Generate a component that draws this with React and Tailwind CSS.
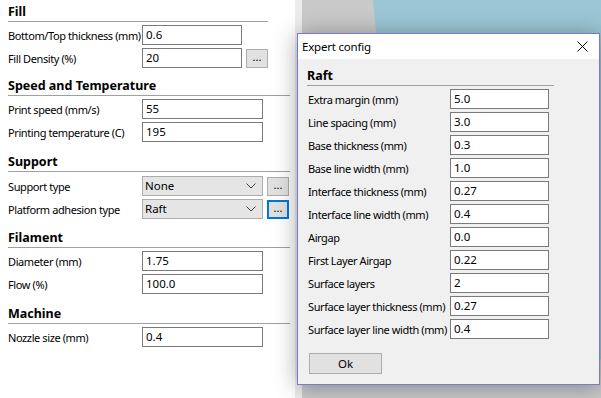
import React from 'react';

const font = { fontFamily: '"Noto Sans", "Segoe UI", sans-serif' };

const Chevron = () => (
  <svg width="10" height="6" viewBox="0 0 10 6" className="shrink-0">
    <polyline points="0.5,0.5 5,5 9.5,0.5" fill="none" stroke="#404040" strokeWidth="1" />
  </svg>
);

const Dots = ({ focused }) => (
  <div
    className={
      'ml-[4px] w-[22px] h-[19px] flex items-center justify-center bg-[#e1e1e1] text-[11px] leading-none pb-[3px] ' +
      (focused ? 'border-2 border-[#0078d7]' : 'border border-[#adadad]')
    }
  >
    ...
  </div>
);

const Field = ({ value, w = 'w-[121px]' }) => (
  <div className={`${w} h-[20px] border border-[#7a7a7a] bg-white pl-[3px] flex items-center text-[11.5px] leading-none`}>
    {value}
  </div>
);

const Combo = ({ value }) => (
  <div className="w-[121px] h-[20px] border border-[#adadad] bg-[#e5e5e5] pl-[2px] pr-[6px] flex items-center justify-between text-[11.5px] leading-none">
    <span>{value}</span>
    <Chevron />
  </div>
);

const Row = ({ label, children }) => (
  <div className="h-[20px] flex items-center">
    <span className="w-[134px] shrink-0 text-[11px] tracking-[-0.4px] leading-none whitespace-nowrap">{label}</span>
    {children}
  </div>
);

const Header = ({ title, line = 'w-[282px]' }) => (
  <div className={`${line} h-[22px] border-b border-[#a0a0a0] flex items-end pb-[3px]`}>
    <span className="text-[12.5px] font-bold leading-none">{title}</span>
  </div>
);

const DRow = ({ label, value }) => (
  <div className="h-[20px] flex items-center">
    <span className="w-[142px] shrink-0 text-[11px] tracking-[-0.4px] leading-none whitespace-nowrap">{label}</span>
    <div className="w-[99px] h-[20px] border border-[#7a7a7a] bg-white pl-[3px] flex items-center text-[11.5px] leading-none">
      {value}
    </div>
  </div>
);

const raft = [
  ['Extra margin (mm)', '5.0'],
  ['Line spacing (mm)', '3.0'],
  ['Base thickness (mm)', '0.3'],
  ['Base line width (mm)', '1.0'],
  ['Interface thickness (mm)', '0.27'],
  ['Interface line width (mm)', '0.4'],
  ['Airgap', '0.0'],
  ['First Layer Airgap', '0.22'],
  ['Surface layers', '2'],
  ['Surface layer thickness (mm)', '0.27'],
  ['Surface layer line width (mm)', '0.4'],
];

export default function App() {
  return (
    <div className="relative w-[601px] h-[398px] flex overflow-hidden text-black" style={font}>
      <div className="w-[295px] h-full bg-white pl-[8px] shrink-0">
        <Header title="Fill" line="w-[260px]" />
        <div className="mt-[3px] flex flex-col gap-[3px]">
          <Row label="Bottom/Top thickness (mm)"><Field value="0.6" w="w-[100px]" /></Row>
          <Row label="Fill Density (%)"><Field value="20" w="w-[100px]" /><Dots /></Row>
        </div>

        <div className="mt-[6px]"><Header title="Speed and Temperature" /></div>
        <div className="mt-[3px] flex flex-col gap-[3px]">
          <Row label="Print speed (mm/s)"><Field value="55" /></Row>
          <Row label="Printing temperature (C)"><Field value="195" /></Row>
        </div>

        <div className="mt-[8px]"><Header title="Support" /></div>
        <div className="mt-[4px] flex flex-col gap-[3px]">
          <Row label="Support type"><Combo value="None" /><Dots /></Row>
          <Row label="Platform adhesion type"><Combo value="Raft" /><Dots focused /></Row>
        </div>

        <div className="mt-[7px]"><Header title="Filament" /></div>
        <div className="mt-[3px] flex flex-col gap-[3px]">
          <Row label="Diameter (mm)"><Field value="1.75" /></Row>
          <Row label="Flow (%)"><Field value="100.0" /></Row>
        </div>

        <div className="mt-[8px]"><Header title="Machine" /></div>
        <div className="mt-[3px] flex flex-col gap-[3px]">
          <Row label="Nozzle size (mm)"><Field value="0.4" /></Row>
        </div>
      </div>

      <div className="w-[7px] h-full bg-[#ececec] shrink-0" />
      <div className="relative flex-1 h-full bg-[#9cc6d6]">
        <svg className="absolute inset-0" width="299" height="398" viewBox="0 0 299 398">
          <polygon points="0,0 71,0 90,200 299,360 299,398 0,398" fill="#c9c9c9" />
        </svg>
      </div>

      <div className="absolute left-[297px] top-[33px] w-[303px] h-[352px] border border-[#7a7acf] bg-[#f0f0f0] shadow-[0_2px_22px_rgba(0,0,0,0.35)] flex flex-col">
        <div className="h-[25px] bg-white flex items-center justify-between pl-[4px] pr-[11px] shrink-0">
          <span className="text-[11.5px] tracking-[-0.2px] leading-none">Expert config</span>
          <svg width="11" height="11" viewBox="0 0 11 11">
            <path d="M0.5 0.5 L10.5 10.5 M10.5 0.5 L0.5 10.5" stroke="#000" strokeWidth="1" />
          </svg>
        </div>
        <div className="pl-[9px] pt-[5px]">
          <div className="w-[247px] h-[22px] border-b border-[#a0a0a0] flex items-end pb-[3px]">
            <span className="text-[12.5px] font-bold leading-none">Raft</span>
          </div>
          <div className="mt-[3px] pl-[1px] flex flex-col gap-[3px]">
            {raft.map(([l, v]) => (
              <DRow key={l} label={l} value={v} />
            ))}
          </div>
          <div className="mt-[14px] ml-[2px] w-[73px] h-[21px] border border-[#adadad] bg-[#e1e1e1] flex items-center justify-center text-[11.5px] leading-none">
            Ok
          </div>
        </div>
      </div>
    </div>
  );
}
